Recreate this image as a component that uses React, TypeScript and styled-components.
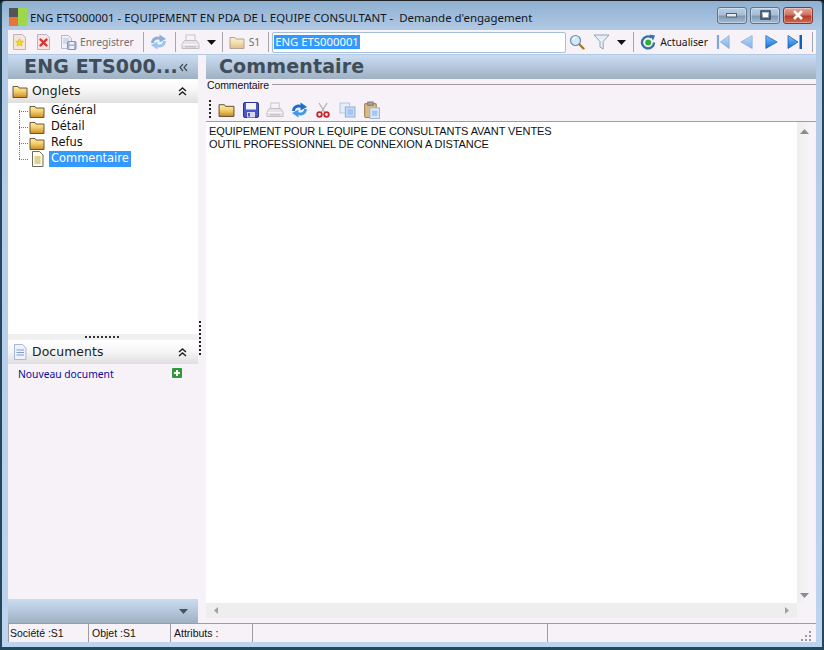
import React from "react";
import styled, { createGlobalStyle } from "styled-components";

const Global = createGlobalStyle`
  html, body { margin: 0; padding: 0; background: #0d1a24; }
  #root { width: 824px; height: 650px; overflow: hidden; }
  * { box-sizing: border-box; }
`;

const Win = styled.div`
  width: 824px; height: 650px; display: flex; flex-direction: column;
  border-style: solid; border-width: 1px 2px 3px 2px; border-color: #1d2327 #24485a #1f4a5c #24485a;
  border-radius: 5px 5px 0 0;
  background: linear-gradient(180deg, #8fb0d1 0, #b2cae5 30px, #bcd4ef 100%);
  font-family: "DejaVu Sans", sans-serif; color: #111; overflow: hidden;
`;
const TitleBar = styled.div`
  height: 29px; flex: none; display: flex; align-items: center; padding: 2px 9px 0 7px;
`;
const AppLogo = styled.svg`width: 18px; height: 18px; flex: none; margin-right: 3px;`;
const TitleText = styled.div`
  flex: 1; font: 11.44px "Noto Sans", sans-serif; white-space: pre; color: #10161c; padding-top: 2px;
`;
const WinBtn = styled.div<{ $close?: boolean }>`
  width: 30px; height: 17px; margin-left: 3px; margin-top: -3px; border-radius: 3px;
  border: 1px solid ${p => (p.$close ? "#7a3a32" : "#5f7488")};
  background: ${p => p.$close
    ? "linear-gradient(180deg,#e3a79a 0,#d0715f 45%,#b63d2a 55%,#cf6b52 100%)"
    : "linear-gradient(180deg,#b9cde2 0,#a7bed6 45%,#8098b1 55%,#a4bcd3 100%)"};
  display: flex; align-items: center; justify-content: center;
  box-shadow: inset 0 0 0 1px rgba(255,255,255,.35);
`;
const Frame = styled.div`
  flex: 1; min-height: 0; display: flex; flex-direction: column; padding: 0 6px 5px 6px;
`;
const Toolbar = styled.div`
  height: 24px; flex: none; display: flex; align-items: center; background: #f6f2f7; padding-left: 4px;
`;
const Item = styled.span<{ $ml?: number }>`
  display: inline-flex; align-items: center; flex: none; margin-left: ${p => p.$ml ?? 0}px;
`;
const Sep = styled.span<{ $ml?: number }>`
  width: 1px; height: 20px; flex: none; background: #a6a6ae; margin-left: ${p => p.$ml ?? 0}px;
`;
const TbLabel = styled.span<{ $ml?: number; $off?: boolean }>`
  font: 10.3px "Noto Sans", sans-serif; flex: none; white-space: pre; margin-left: ${p => p.$ml ?? 0}px;
  color: ${p => (p.$off ? "#6f6f75" : "#141414")};
`;
const CodeInput = styled.div`
  width: 294px; height: 21px; flex: none; margin-left: 3px; background: #fff; border: 1px solid #a9bfd6;
  border-radius: 2px; padding: 1px 1px; display: flex; align-items: center;
`;
const Selected = styled.span`
  background: #3399ff; color: #fff; font: 11.3px "Noto Sans", sans-serif; line-height: 14px; padding: 0 1px; white-space: pre;
`;
const Main = styled.div`flex: 1; min-height: 0; display: flex; margin-top: 1px;`;
const Left = styled.div`width: 190px; flex: none; display: flex; flex-direction: column; background: #f6f2f7;`;
const VSplit = styled.div`width: 8px; flex: none; background: #f6f2f7; position: relative;`;
const VDots = styled.div`
  position: absolute; left: 1px; top: 266px; height: 36px; width: 2px;
  background: repeating-linear-gradient(180deg,#222 0 2px,transparent 2px 4px);
`;
const Right = styled.div`flex: 1; min-width: 0; display: flex; flex-direction: column; background: #f6f2f7;`;
const Band = styled.div`
  height: 24px; flex: none; display: flex; align-items: center;
  background: linear-gradient(180deg, #c9dcf2 0, #b6c9dd 45%, #9fb0c1 100%);
`;
const BandTitle = styled.div<{ $pl: number }>`
  font: bold 19px "DejaVu Sans", sans-serif; color: #3e4d59; padding: 0 0 2px ${p => p.$pl}px; white-space: pre; letter-spacing: 0.15px;
`;
const BandEnd = styled.div`margin-left: auto; margin-right: 10px; display: flex; align-items: center;`;
const PanelHead = styled.div`
  height: 24px; flex: none; display: flex; align-items: center; padding: 0 11px 0 4px;
  background: linear-gradient(180deg, #ffffff 0, #f7f7f7 45%, #dfdfdf 100%);
  font: 12.4px "DejaVu Sans", sans-serif; color: #222;
`;
const HeadLabel = styled.span`margin-left: 4px; flex: 1; padding-bottom: 2px; letter-spacing: .1px;`;
const TreeBox = styled.div`
  height: 231px; flex: none; background: #fff; position: relative; padding: 0 0 0 21px;
`;
const TreeLine = styled.div`
  position: absolute; left: 11px; top: 7px; width: 1px; height: 49px;
  background: repeating-linear-gradient(180deg,#777 0 1px,transparent 1px 2px);
`;
const Row = styled.div`height: 16px; display: flex; align-items: center; position: relative;`;
const RowTick = styled.span`
  position: absolute; left: -10px; top: 8px; width: 10px; height: 1px;
  background: repeating-linear-gradient(90deg,#777 0 1px,transparent 1px 2px);
`;
const RowText = styled.span<{ $sel?: boolean }>`
  font: 11.45px "DejaVu Sans", sans-serif; margin-left: ${p => (p.$sel ? 5 : 4)}px; padding: 0 2px; height: 16px; line-height: 15px;
  background: ${p => (p.$sel ? "#3399ff" : "transparent")}; color: ${p => (p.$sel ? "#fff" : "#111")};
`;
const HSplit = styled.div`
  height: 6px; flex: none; background: #f0f0f0; display: flex; justify-content: center; align-items: center;
`;
const HDots = styled.div`
  width: 36px; height: 2px; background: repeating-linear-gradient(90deg,#333 0 2px,transparent 2px 4px);
`;
const DocBody = styled.div`flex: 1; min-height: 0; padding: 4px 16px 0 10px; display: flex; justify-content: space-between;`;
const DocLink = styled.span`font: 10.3px "Noto Sans", sans-serif; color: #0a0aa0; line-height: 13px;`;
const GroupRow = styled.div`height: 13px; flex: none; display: flex; align-items: center; padding-bottom: 1px;`;
const GroupLabel = styled.span`font: 10.5px "Liberation Sans", sans-serif; padding-left: 1px; padding-right: 3px; letter-spacing: -0.1px; color: #111;`;
const GroupLine = styled.span`flex: 1; height: 1px; background: #a39a9f; margin-top: -2px;`;
const EditBar = styled.div`height: 24px; flex: none; display: flex; align-items: center; margin-top: 6px; padding-left: 3px; border-bottom: 1px solid #9d9da3;`;
const Grip = styled.span`
  width: 2px; height: 20px; flex: none;
  background: repeating-linear-gradient(180deg,#222 0 2px,transparent 2px 4px);
`;
const EditorWrap = styled.div`flex: 1; min-height: 0; display: grid; grid-template-columns: 1fr 15px; grid-template-rows: 1fr 15px; margin-right: 4px;`;
const Editor = styled.div`
  background: #fff; padding: 3px 3px; font: 11px/13px "Liberation Sans", sans-serif; letter-spacing: -0.08px; color: #111; white-space: pre;
`;
const VScroll = styled.div`
  background: linear-gradient(90deg,#eee,#f6f6f6); display: flex; flex-direction: column; justify-content: space-between; align-items: center; padding: 6px 0 3px;
`;
const HScroll = styled.div`
  background: #eeeeee; display: flex; justify-content: space-between; align-items: center; padding: 0 6px 0 6px;
`;
const Corner = styled.div`background: #f6f2f7;`;
const EditorBottom = styled.div`height: 5px; flex: none; background: #f6f2f7;`;
const Status = styled.div`
  height: 19px; flex: none; display: flex; background: #f6f2f7; border-top: 1px solid #9c9ca2;
  font: 10.5px "Liberation Sans", sans-serif; color: #111; position: relative;
`;
const Cell = styled.div<{ $w: number }>`
  width: ${p => p.$w}px; flex: none; border-right: 1px solid #9c9ca2; padding: 3px 0 0 3px; white-space: pre;
  &:first-child { border-left: 1px solid #9c9ca2; padding-left: 1px; }
`;
const ResizeGrip = styled.svg`position: absolute; right: 4px; bottom: 1px; width: 12px; height: 12px;`;
const Ico = styled.svg<{ $w?: number; $h?: number; $fade?: boolean }>`
  width: ${p => p.$w ?? 16}px; height: ${p => p.$h ?? 16}px; flex: none; display: block; opacity: ${p => (p.$fade ? 0.5 : 1)};
`;

type IP = { $fade?: boolean; $w?: number; $h?: number };
const FolderIco = (p: IP) => (
  <Ico viewBox="0 0 16 16" preserveAspectRatio="none" {...p}>
    <defs><linearGradient id="fgy" x1="0" y1="0" x2="0" y2="1">
      <stop offset="0" stopColor="#fff0a8" /><stop offset=".45" stopColor="#f4cf70" /><stop offset="1" stopColor="#c98a24" />
    </linearGradient></defs>
    <path d="M1 3.500h5l1 1.500h8v9.500H1z" fill="url(#fgy)" stroke="#5a4a2a" strokeWidth=".9" />
  </Ico>
);
const StarDoc = () => (
  <Ico viewBox="0 0 16 16">
    <path d="M1.500 .5h9l3 3v12h-12z" fill="#f5e7cf" stroke="#b8b2cc" />
    <path d="M7.500 4.500l1.300 2.500 2.700.4-2 1.900.5 2.700-2.500-1.300-2.500 1.300.5-2.700-2-1.900 2.700-.4z" fill="#f3d62b" stroke="#d2a22a" strokeWidth=".5" />
  </Ico>
);
const RedDoc = () => (
  <Ico viewBox="0 0 16 16">
    <path d="M1.500 .5h9l3 3v12h-12z" fill="#f4e4e4" stroke="#b8b2cc" />
    <path d="M4.500 5.500l6 6M10.500 5.500l-6 6" stroke="#d93030" strokeWidth="2.400" strokeLinecap="round" />
  </Ico>
);
const SaveAsDoc = () => (
  <Ico viewBox="0 0 17 16" $w={17}>
    <path d="M1.500 1.500h7l3 3v10h-10z" fill="#eef1f8" stroke="#b4bccb" />
    <path d="M3 5h6M3 7h6M3 9h4" stroke="#b5c1da" />
    <rect x="7.500" y="7.500" width="8.500" height="8" rx="1" fill="#a9b4d4" stroke="#8490b3" />
    <rect x="9.500" y="8" width="4.500" height="2.500" fill="#eef0f7" />
    <rect x="9.500" y="12" width="4.500" height="3" fill="#eef0f7" />
  </Ico>
);
const RefreshIco = (p: IP) => (
  <Ico viewBox="0 0 17 16" $w={17} {...p}>
    <path d="M2.500 9C2.500 5 6 3 10.500 4.500" fill="none" stroke="#1f6fc8" strokeWidth="2.800" />
    <path d="M9.500 .5l6.500 4.500-6.500 3.500z" fill="#1f6fc8" />
    <path d="M14.500 7C14.500 11 11 13 6.500 11.500" fill="none" stroke="#3f9ae6" strokeWidth="2.800" />
    <path d="M7.500 15.500L1 11l6.500-3.500z" fill="#3f9ae6" />
  </Ico>
);
const PrinterIco = (p: IP) => (
  <Ico viewBox="0 0 19 16" preserveAspectRatio="none" $w={19} {...p}>
    <rect x="5" y="1" width="9" height="6" fill="#f4f4f4" stroke="#9a9a9a" />
    <path d="M3.500 6.500h12l2.500 3.500v4.500H1V10z" fill="#d6d6d6" stroke="#8e8e8e" />
    <path d="M1.500 10.500h16" stroke="#f7f7f7" />
    <rect x="4" y="12" width="11" height="1.500" fill="#9a9a9a" />
  </Ico>
);
const DropArrow = () => (
  <Ico viewBox="0 0 9 5" $w={9} $h={5}><path d="M0 0h9L4.500 5z" fill="#111" /></Ico>
);
const SearchIco = () => (
  <Ico viewBox="0 0 16 16">
    <path d="M10 10l4.500 4.500" stroke="#a87a2a" strokeWidth="2.400" strokeLinecap="round" />
    <circle cx="6.500" cy="6.500" r="5" fill="#d4e8fa" stroke="#6f8fb5" strokeWidth="1.200" />
    <path d="M3.500 6a3 3 0 013-2.500" stroke="#fff" strokeWidth="1.200" fill="none" />
  </Ico>
);
const FilterIco = () => (
  <Ico viewBox="0 0 17 16" $w={17}>
    <path d="M1 1h15l-5.800 6.500v7.500L7 13V7.500z" fill="#e6eef6" stroke="#8da4b8" />
  </Ico>
);
const ActIco = () => (
  <Ico viewBox="0 0 16 16">
    <path d="M11.500 3.500A6 6 0 1 0 14 8.500" fill="none" stroke="#3a6ea8" strokeWidth="2.400" />
    <circle cx="8.200" cy="8.500" r="3" fill="#2fae3c" />
    <path d="M9.500 .5l5.500 1-2 5z" fill="#3a6ea8" />
  </Ico>
);
const NavIco = ({ d, bar, fade, w }: { d: "l" | "r"; bar?: boolean; fade?: boolean; w: number }) => (
  <Ico viewBox="0 0 16 16" preserveAspectRatio="none" $w={w} $fade={fade}>
    <defs><linearGradient id="nv" x1="0" y1="0" x2="0" y2="1">
      <stop offset="0" stopColor="#7fc1ff" /><stop offset="1" stopColor="#0f6fd6" />
    </linearGradient></defs>
    {d === "r"
      ? <path d={bar ? "M1 1.500l10 6.500-10 6.500z" : "M1 1.500l14 6.500-14 6.500z"} fill="url(#nv)" stroke="#1257a8" strokeWidth=".7" />
      : <path d={bar ? "M15 1.500L5 8l10 6.500z" : "M15 1.500L1 8l14 6.500z"} fill="url(#nv)" stroke="#1257a8" strokeWidth=".7" />}
    {bar && d === "r" && <rect x="12.500" y="1" width="2.500" height="14" fill="#0f5fbe" />}
    {bar && d === "l" && <rect x="1" y="1" width="2.500" height="14" fill="#0f5fbe" />}
  </Ico>
);
const FloppyIco = () => (
  <Ico viewBox="0 0 16 16">
    <rect x=".5" y=".5" width="15" height="15" rx="1.500" fill="#4b56c8" stroke="#2c3590" />
    <rect x="3" y="1" width="10" height="6.500" fill="#f2f3fb" />
    <rect x="4" y="10" width="8" height="5.500" fill="#d7d9ef" />
    <rect x="5" y="11" width="2" height="3.500" fill="#4b56c8" />
  </Ico>
);
const CutIco = () => (
  <Ico viewBox="0 0 14 16" $w={14}>
    <path d="M3 1l5.500 9M11 1L5.500 10" stroke="#b5b5b5" strokeWidth="1.400" />
    <circle cx="3.500" cy="12.500" r="2.300" fill="none" stroke="#c8242c" strokeWidth="1.800" />
    <circle cx="10.500" cy="12.500" r="2.300" fill="none" stroke="#c8242c" strokeWidth="1.800" />
  </Ico>
);
const CopyIco = () => (
  <Ico viewBox="0 0 16 16" preserveAspectRatio="none" $w={17}>
    <rect x="1" y="1" width="9" height="10" fill="#e4edf9" stroke="#b6c8e2" />
    <rect x="6" y="5" width="9" height="10" fill="#c7daf5" stroke="#8fb0dc" />
    <rect x="8" y="7" width="5" height="6" fill="#a7c4ef" />
  </Ico>
);
const PasteIco = () => (
  <Ico viewBox="0 0 16 17" preserveAspectRatio="none" $w={17} $h={18}>
    <rect x="1.500" y="2.500" width="11" height="13" rx="1" fill="#d8b98a" stroke="#a58452" />
    <rect x="4.500" y="1" width="5" height="3" fill="#b2a99a" stroke="#80776a" />
    <rect x="6.500" y="6.500" width="9" height="10" fill="#dbe8f8" stroke="#9bb8db" />
    <rect x="8.500" y="9" width="5" height="5" fill="#a9c5ec" />
  </Ico>
);
const NoteIco = () => (
  <Ico viewBox="0 0 13 16" $w={13}>
    <path d="M1.500 .5h7l3.500 3.500v11.500H1.500z" fill="#fffdea" stroke="#6b6a5e" />
    <path d="M3.500 6h6M3.500 8h6M3.500 10h6M3.500 12h6" stroke="#b8a73c" strokeWidth="1" />
  </Ico>
);
const DocIco = () => (
  <Ico viewBox="0 0 16 16">
    <path d="M2.500 .5h8l3.500 3.500v11.500H2.500z" fill="#eef2fb" stroke="#a7b7d8" />
    <path d="M4.500 6h7.500M4.500 8.500h7.500M4.500 11h7.500" stroke="#7f9ad0" />
  </Ico>
);
const PlusIco = () => (
  <Ico viewBox="0 0 10 10" $w={10} $h={10}>
    <rect width="10" height="10" rx="1" fill="#2e9a3c" />
    <path d="M5 2v6M2 5h6" stroke="#fff" strokeWidth="2" />
  </Ico>
);
const Chevrons = () => (
  <Ico viewBox="0 0 9 9" $w={9} $h={9}>
    <path d="M1 4l3.500-3L8 4M1 8l3.500-3L8 8" fill="none" stroke="#222" strokeWidth="1.500" />
  </Ico>
);
const ChevLeft = () => (
  <Ico viewBox="0 0 9 9" $w={9} $h={9}>
    <path d="M4 1L1 4.500 4 8M8 1L5 4.500 8 8" fill="none" stroke="#3e4a54" strokeWidth="1.200" />
  </Ico>
);
const ScrollTri = ({ dir, color = "#8c8c8c" }: { dir: "u" | "d" | "l" | "r"; color?: string }) => {
  const d = { u: "M0 6L4.500 1 9 6z", d: "M0 2h9L4.500 7z", l: "M6 1v7L2 4.500z", r: "M3 1v7l4-3.500z" }[dir];
  return <Ico viewBox="0 0 9 9" $w={9} $h={9}><path d={d} fill={color} /></Ico>;
};

const items = ["Général", "Détail", "Refus"];

export default function App() {
  return (
    <>
      <Global />
      <Win>
        <TitleBar>
          <AppLogo viewBox="0 0 18 18">
            <rect width="9" height="9" fill="#555" />
            <rect y="9" width="9" height="9" fill="#e8743a" />
            <rect x="9" width="9" height="18" fill="#9bd84a" />
          </AppLogo>
          <TitleText>{"ENG ETS000001 - EQUIPEMENT EN PDA DE L EQUIPE CONSULTANT -  Demande d'engagement"}</TitleText>
          <WinBtn><svg width="12" height="6" viewBox="0 0 12 6"><rect x=".5" y="1.500" width="10" height="3.500" fill="#e4ecf3" stroke="#4c5d6d" /></svg></WinBtn>
          <WinBtn><svg width="11" height="10" viewBox="0 0 11 10"><rect x="1" y="1" width="9" height="8" fill="none" stroke="#33465a" strokeWidth="1.500" /><rect x="3" y="3" width="5" height="4" fill="#fff" /></svg></WinBtn>
          <WinBtn $close><svg width="12" height="10" viewBox="0 0 12 10"><path d="M2 1l8 8M10 1L2 9" stroke="#fff" strokeWidth="2.600" /></svg></WinBtn>
        </TitleBar>
        <Frame>
          <Toolbar>
            <StarDoc />
            <Item $ml={8}><RedDoc /></Item>
            <Item $ml={8}><SaveAsDoc /></Item>
            <TbLabel $ml={3} $off>Enregistrer</TbLabel>
            <Sep $ml={9} />
            <Item $ml={6}><RefreshIco $fade /></Item>
            <Sep $ml={8} />
            <Item $ml={5}><PrinterIco $fade /></Item>
            <Item $ml={7}><DropArrow /></Item>
            <Sep $ml={6} />
            <Item $ml={6}><FolderIco $fade /></Item>
            <TbLabel $ml={4} $off>S1</TbLabel>
            <Sep $ml={8} />
            <CodeInput><Selected>ENG ETS000001</Selected></CodeInput>
            <Item $ml={3}><SearchIco /></Item>
            <Item $ml={8}><FilterIco /></Item>
            <Item $ml={7}><DropArrow /></Item>
            <Sep $ml={7} />
            <Item $ml={6}><ActIco /></Item>
            <TbLabel $ml={4}>Actualiser</TbLabel>
            <Item $ml={8}><NavIco d="l" bar fade w={14} /></Item>
            <Item $ml={10}><NavIco d="l" fade w={13} /></Item>
            <Item $ml={12}><NavIco d="r" w={13} /></Item>
            <Item $ml={9}><NavIco d="r" bar w={16} /></Item>
            <Sep $ml={9} />
          </Toolbar>
          <Main>
            <Left>
              <Band>
                <BandTitle $pl={16}>ENG ETS000...</BandTitle>
                <BandEnd><ChevLeft /></BandEnd>
              </Band>
              <PanelHead><FolderIco /><HeadLabel>Onglets</HeadLabel><Chevrons /></PanelHead>
              <TreeBox>
                <TreeLine />
                {items.map(t => (
                  <Row key={t}><RowTick /><FolderIco /><RowText>{t}</RowText></Row>
                ))}
                <Row><RowTick /><Item $ml={2}><NoteIco /></Item><RowText $sel>Commentaire</RowText></Row>
              </TreeBox>
              <HSplit><HDots /></HSplit>
              <PanelHead><DocIco /><HeadLabel>Documents</HeadLabel><Chevrons /></PanelHead>
              <DocBody><DocLink>Nouveau document</DocLink><PlusIco /></DocBody>
              <Band>
                <BandEnd><ScrollTri dir="d" color="#46525c" /></BandEnd>
              </Band>
            </Left>
            <VSplit><VDots /></VSplit>
            <Right>
              <Band><BandTitle $pl={13}>Commentaire</BandTitle></Band>
              <GroupRow><GroupLabel>Commentaire</GroupLabel><GroupLine /></GroupRow>
              <EditBar>
                <Grip />
                <Item $ml={7}><FolderIco $w={17} $h={17} /></Item>
                <Item $ml={8}><FloppyIco /></Item>
                <Item $ml={7}><PrinterIco $fade $w={18} /></Item>
                <Item $ml={7}><RefreshIco /></Item>
                <Item $ml={8}><CutIco /></Item>
                <Item $ml={9}><CopyIco /></Item>
                <Item $ml={7}><PasteIco /></Item>
              </EditBar>
              <EditorWrap>
                <Editor>{"EQUIPEMENT POUR L EQUIPE DE CONSULTANTS AVANT VENTES\nOUTIL PROFESSIONNEL DE CONNEXION A DISTANCE"}</Editor>
                <VScroll><ScrollTri dir="u" /><ScrollTri dir="d" /></VScroll>
                <HScroll><ScrollTri dir="l" color="#a0a0a0" /><ScrollTri dir="r" color="#a0a0a0" /></HScroll>
                <Corner />
              </EditorWrap>
              <EditorBottom />
            </Right>
          </Main>
          <Status>
            <Cell $w={81}>Société :S1</Cell>
            <Cell $w={82}>Objet :S1</Cell>
            <Cell $w={82}>Attributs :</Cell>
            <Cell $w={295} />
            <ResizeGrip viewBox="0 0 12 12"><path d="M9 2h2v2H9zM5 6h2v2H5zM9 6h2v2H9zM1 10h2v2H1zM5 10h2v2H5zM9 10h2v2H9z" fill="#9a9a9a" /></ResizeGrip>
          </Status>
        </Frame>
      </Win>
    </>
  );
}
